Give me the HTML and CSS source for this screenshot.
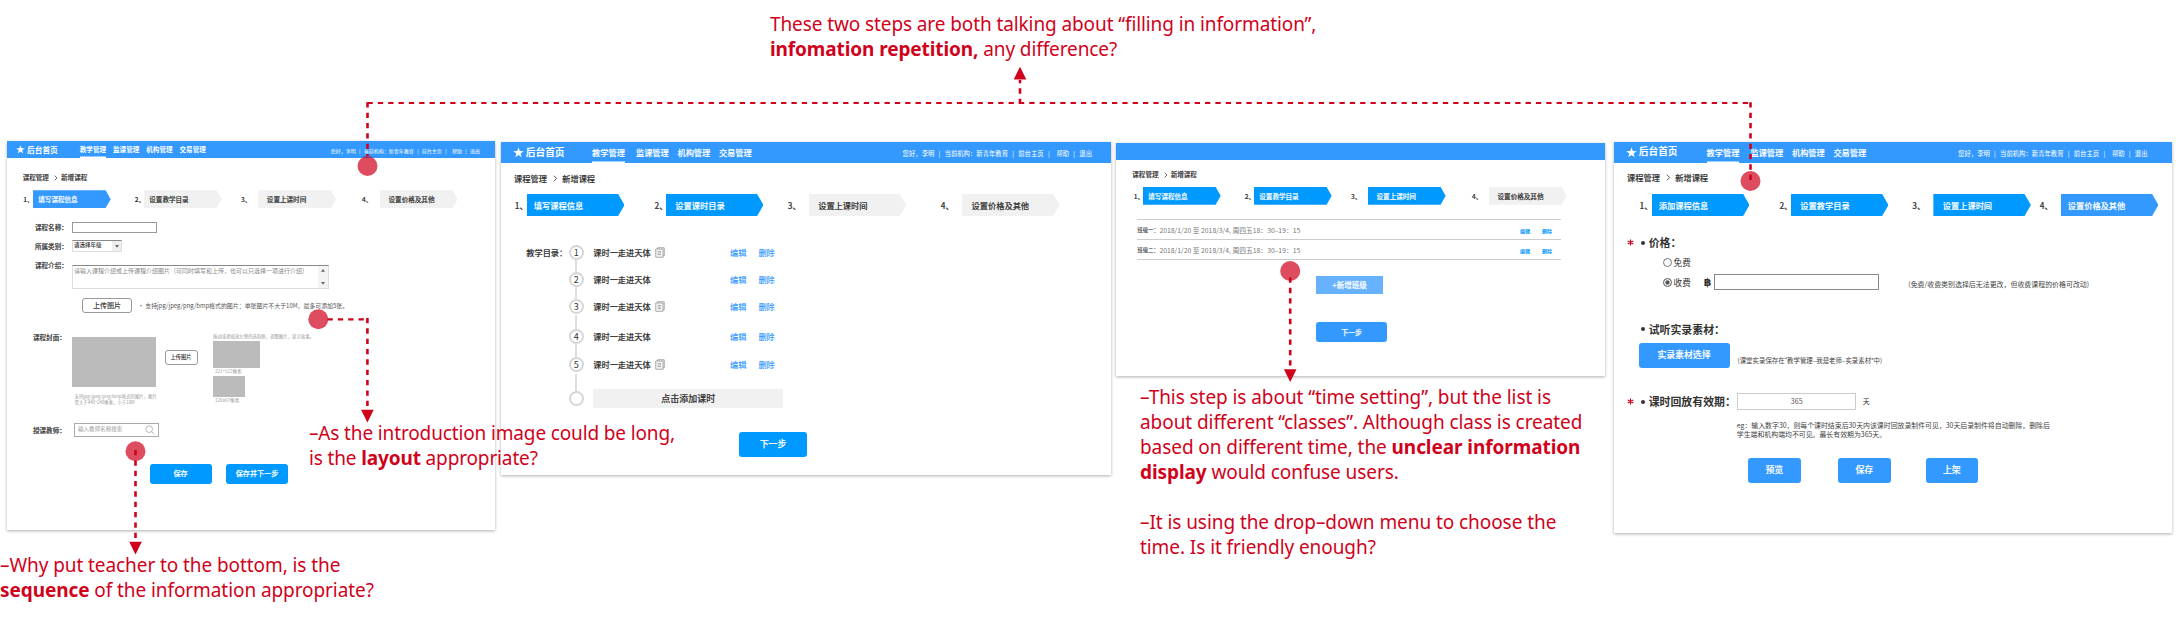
FILE: index.html
```html
<!DOCTYPE html>
<html lang="zh-CN">
<head>
<meta charset="utf-8">
<title>新增课程 flow review</title>
<link rel="stylesheet" href="styles.css">
</head>
<body>
<main class="board">

<section class="panel panel-info">
  <header class="bar">
    <svg class="star" viewBox="0 0 20 20"><path d="M10 0.5l2.4 6.9 7.2.1-5.8 4.3 2.1 7L10 14.6l-5.9 4.2 2.1-7L.4 7.500l7.200-.1z"/></svg>
    <b class="home">后台首页</b>
    <nav class="nav"><span class="on">教学管理</span><span>监课管理</span><span>机构管理</span><span>交易管理</span></nav>
    <div class="user"><span>您好，李明</span><i>|</i><span>当前机构：新青年教育</span><i>|</i><span>前台主页</span><i>|</i><span class="help">帮助</span><i>|</i><span>退出</span></div>
  </header>
  <div class="crumb"><span>课程管理</span><svg class="gt" viewBox="0 0 6 10"><path d="M1 1l4 4-4 4"/></svg><span>新增课程</span></div>
  <div class="steps">
    <span>1、</span><span class="chev sky">填写课程信息</span>
    <span>2、</span><span class="chev">设置教学目录</span>
    <span>3、</span><span class="chev wide">设置上课时间</span>
    <span>4、</span><span class="chev wide">设置价格及其他</span>
  </div>
  <div class="field name"><label>课程名称：</label><span class="input"></span></div>
  <div class="field kind"><label>所属类别：</label><span class="select">请选择年级<span class="drop"><svg viewBox="0 0 6 4"><path d="M0 0h6l-3 4z"/></svg></span></span></div>
  <div class="field intro"><label>课程介绍：</label><span class="area"><span class="hint">请输入课程介绍或上传课程介绍图片（可同时填写和上传，也可以只选择一项进行介绍）</span><span class="scroll"><svg viewBox="0 0 6 4"><path d="M0 4h6l-3-4z"/></svg><svg viewBox="0 0 6 4"><path d="M0 0h6l-3 4z"/></svg></span></span></div>
  <div class="upload"><span class="ghost">上传图片</span><span class="tip">• 支持jpg/jpeg/png/bmp格式的图片：单张图片不大于10M，最多可添加5张。</span></div>
  <div class="cover">
    <label>课程封面：</label>
    <div class="shot"><div class="gray big"></div><p>支持jpg/jpeg/png/bmp格式的图片，图片<br>需大于440*248像素，小于10M</p></div>
    <span class="ghost small">上传图片</span>
    <div class="sizes"><p>拖动或者缩放左侧的选取框，调整图片，显示效果。</p><div class="gray mid"></div><p class="cap">221*122像素</p><div class="gray tiny"></div><p class="cap">120x67像素</p></div>
  </div>
  <div class="field teacher"><label>授课教师：</label><span class="search">输入教师名称搜索<svg viewBox="0 0 12 12"><circle cx="5" cy="5" r="4"/><path d="M8 8l3.200 3.200"/></svg></span></div>
  <div class="actions"><span class="btn">保存</span><span class="btn">保存并下一步</span></div>
</section>

<section class="panel panel-catalog">
  <header class="bar">
    <svg class="star" viewBox="0 0 20 20"><path d="M10 0.5l2.4 6.9 7.2.1-5.8 4.3 2.1 7L10 14.6l-5.9 4.2 2.1-7L.4 7.500l7.200-.1z"/></svg>
    <b class="home">后台首页</b>
    <nav class="nav"><span class="on">教学管理</span><span>监课管理</span><span>机构管理</span><span>交易管理</span></nav>
    <div class="user"><span>您好，李明</span><i>|</i><span>当前机构：新青年教育</span><i>|</i><span>前台主页</span><i>|</i><span class="help">帮助</span><i>|</i><span>退出</span></div>
  </header>
  <div class="crumb"><span>课程管理</span><svg class="gt" viewBox="0 0 6 10"><path d="M1 1l4 4-4 4"/></svg><span>新增课程</span></div>
  <div class="steps">
    <span>1、</span><span class="chev blue">填写课程信息</span>
    <span>2、</span><span class="chev blue wide">设置课时目录</span>
    <span>3、</span><span class="chev wide">设置上课时间</span>
    <span>4、</span><span class="chev wide">设置价格及其他</span>
  </div>
  <div class="catalog">
    <label>教学目录：</label>
    <ol class="lessons">
      <li class="r1"><span class="num">1</span><span class="title">课时一走进天体</span><svg class="doc" viewBox="0 0 10 11"><path d="M2.500 2V.8h6.700v8H8M.8 2H8v8.200H.8zM2.500 4.300h3.700M2.500 6h3.700M2.500 7.700h3.700"/></svg><a>编辑</a><a>删除</a></li>
      <li class="r2"><span class="num">2</span><span class="title">课时一走进天体</span><span></span><a>编辑</a><a>删除</a></li>
      <li class="r3"><span class="num">3</span><span class="title">课时一走进天体</span><svg class="doc" viewBox="0 0 10 11"><path d="M2.500 2V.8h6.700v8H8M.8 2H8v8.200H.8zM2.500 4.300h3.700M2.500 6h3.700M2.500 7.700h3.700"/></svg><a>编辑</a><a>删除</a></li>
      <li class="r4"><span class="num">4</span><span class="title">课时一走进天体</span><span></span><a>编辑</a><a>删除</a></li>
      <li class="r5"><span class="num">5</span><span class="title">课时一走进天体</span><svg class="doc" viewBox="0 0 10 11"><path d="M2.500 2V.8h6.700v8H8M.8 2H8v8.200H.8zM2.500 4.300h3.700M2.500 6h3.700M2.500 7.700h3.700"/></svg><a>编辑</a><a>删除</a></li>
      <li class="add"><span class="num"></span><span class="addbar">点击添加课时</span></li>
    </ol>
  </div>
  <span class="btn next">下一步</span>
</section>

<section class="panel panel-time">
  <header class="bar"></header>
  <div class="crumb"><span>课程管理</span><svg class="gt" viewBox="0 0 6 10"><path d="M1 1l4 4-4 4"/></svg><span>新增课程</span></div>
  <div class="steps">
    <span>1、</span><span class="chev blue">填写课程信息</span>
    <span>2、</span><span class="chev blue">设置教学目录</span>
    <span>3、</span><span class="chev blue wide">设置上课时间</span>
    <span>4、</span><span class="chev wide">设置价格及其他</span>
  </div>
  <div class="classes">
    <div class="class"><span class="cls">班级一：</span><span class="when">2018/1/20 至 2018/3/4, 周四五18：30–19：15</span><a>编辑</a><a>删除</a></div>
    <div class="class"><span class="cls">班级二：</span><span class="when">2018/1/20 至 2018/3/4, 周四五18：30–19：15</span><a>编辑</a><a>删除</a></div>
  </div>
  <span class="btn plus">+新增班级</span>
  <span class="btn next">下一步</span>
</section>

<section class="panel panel-price">
  <header class="bar">
    <svg class="star" viewBox="0 0 20 20"><path d="M10 0.5l2.4 6.9 7.2.1-5.8 4.3 2.1 7L10 14.6l-5.9 4.2 2.1-7L.4 7.500l7.200-.1z"/></svg>
    <b class="home">后台首页</b>
    <nav class="nav"><span class="on">教学管理</span><span>监课管理</span><span>机构管理</span><span>交易管理</span></nav>
    <div class="user"><span>您好，李明</span><i>|</i><span>当前机构：新青年教育</span><i>|</i><span>前台主页</span><i>|</i><span class="help">帮助</span><i>|</i><span>退出</span></div>
  </header>
  <div class="crumb"><span>课程管理</span><svg class="gt" viewBox="0 0 6 10"><path d="M1 1l4 4-4 4"/></svg><span>新增课程</span></div>
  <div class="steps">
    <span>1、</span><span class="chev blue">添加课程信息</span>
    <span>2、</span><span class="chev blue wide">设置教学目录</span>
    <span>3、</span><span class="chev blue wide">设置上课时间</span>
    <span>4、</span><span class="chev sky">设置价格及其他</span>
  </div>
  <div class="head price"><svg class="must" viewBox="0 0 8 8"><path d="M4 .5v7M.8 2.200l6.400 3.600M7.200 2.200L.8 5.800"/></svg><i class="dot"></i><b>价格：</b></div>
  <div class="pay free"><i class="radio"></i><span>免费</span></div>
  <div class="pay paid"><i class="radio checked"></i><span>收费</span><b class="baht">฿</b><span class="input"></span><span class="note">(免费/收费类别选择后无法更改，但收费课程的价格可改动)</span></div>
  <div class="head trial"><span></span><i class="dot"></i><b>试听实录素材：</b></div>
  <div class="pick"><span class="btn">实录素材选择</span><span class="note">(课堂实录保存在<q>教学管理–我是老师–实录素材</q>中)</span></div>
  <div class="head valid"><svg class="must" viewBox="0 0 8 8"><path d="M4 .5v7M.8 2.200l6.400 3.600M7.200 2.200L.8 5.800"/></svg><i class="dot"></i><b>课时回放有效期：</b><span class="days">365</span><span class="unit">天</span></div>
  <p class="eg">eg：输入数字30，则每个课时结束后30天内该课时回放录制件可见，30天后录制件将自动删除，删除后<br>学生端和机构端均不可见。最长有效期为365天。</p>
  <div class="actions"><span class="btn">预览</span><span class="btn">保存</span><span class="btn">上架</span></div>
</section>

<svg class="links" viewBox="0 0 2176 629">
  <g class="spots">
    <circle cx="367.500" cy="166" r="10"/><circle cx="1750.500" cy="181" r="10"/>
    <circle cx="318.300" cy="319.300" r="10"/><circle cx="135.500" cy="451.200" r="10"/><circle cx="1290.200" cy="271" r="10"/>
  </g>
  <g class="dashes">
    <path class="thin" d="M367.500 103H1750.500"/><path d="M367.500 102.300V156"/><path d="M1750.500 102.300V180"/><path d="M1020 104V80"/>
    <path class="thin" d="M327.500 319.300H368.500"/><path d="M367.400 318V408"/><path d="M135.500 450V541"/><path d="M1290.200 277.500V368"/>
  </g>
  <g class="tips">
    <path d="M1020 66.700l6.300 12.800h-12.600z"/><path d="M367.400 422.500l-6.300-12.800h12.600z"/>
    <path d="M135.500 554.500l-6.300-12.800h12.600z"/><path d="M1290.200 382l-6.300-12.800h12.600z"/>
  </g>
</svg>

<p class="comment c-repeat">These two steps are both talking about “filling in information”,<br><b>infomation repetition,</b> any difference?</p>
<p class="comment c-layout">–As the introduction image could be long,<br>is the <b>layout</b> appropriate?</p>
<p class="comment c-time">–This step is about “time setting”, but the list is<br>about different “classes”. Although class is created<br>based on different time, the <b>unclear information</b><br><b>display</b> would confuse users.<br><br>–It is using the drop–down menu to choose the<br>time. Is it friendly enough?</p>
<p class="comment c-order">–Why put teacher to the bottom, is the<br><b>sequence</b> of the information appropriate?</p>
</main>
</body>
</html>
```

FILE: styles.css
```css
* { box-sizing: border-box; }
body { margin: 0; background: #fff; }
p, ol { margin: 0; padding: 0; }
i { font-style: normal; }

.board {
  position: relative;
  width: 2176px;
  height: 629px;
  overflow: hidden;
  font-family: "Noto Sans CJK SC", "Noto Sans", sans-serif;
  color: #333;
}

/* Panels placed on the board */
.panel {
  position: absolute;
  display: flex;
  flex-direction: column;
  background: #fff;
  box-shadow: 0 1px 3px rgba(0, 0, 0, .32);
  line-height: 1;
  font-weight: 500;
  white-space: nowrap;
}
.panel-info { left: 7px; top: 141px; width: 488px; height: 389px; font-size: 6.57px; }
.panel-catalog { left: 501px; top: 142px; width: 610px; height: 333px; font-size: 8.22px; }
.panel-time { left: 1116px; top: 143px; width: 488.500px; height: 233px; font-size: 6.57px; }
.panel-price { left: 1614px; top: 141.500px; width: 557.500px; height: 391.500px; font-size: 8.22px; }
.crumb, .steps, .field label, .cover label, .catalog label, .title, .addbar, .btn, .nav { -webkit-text-stroke-width: .15px; }

/* Top bar */
.bar { display: flex; align-items: center; background: #39f; color: #fff; }
.star { fill: #fff; }
.nav { display: flex; align-self: stretch; }
.nav span { display: flex; align-items: center; }
.nav .on { box-shadow: inset 0 -1.500px #fff; }
.user { display: flex; margin-left: auto; gap: .67em; font-weight: 400; }
.user .help { margin-left: .4em; }

.panel-info .bar { height: 17px; padding: 0 15px 0 9px; }
.panel-info .star { width: 9px; height: 9px; margin-right: 2px; }
.panel-info .home { font-size: 7.700px; margin-right: 22px; }
.panel-info .nav { gap: 7px; font-weight: 700; -webkit-text-stroke-width: 0; }
.panel-info .user { font-size: 5px; padding-top: 2px; }

.panel-catalog .bar { height: 21px; padding: 0 19px 0 11.500px; }
.panel-price .bar { height: 21px; padding: 0 24px 0 11.500px; }
.panel-catalog .star, .panel-price .star { width: 11px; height: 11px; margin-right: 2.300px; }
.panel-catalog .home, .panel-price .home { font-size: 9.700px; margin-right: 27.500px; }
.panel-price .home { margin-right: 29px; }
.panel-catalog .nav, .panel-price .nav { gap: 8.600px; }
.panel-catalog .on, .panel-price .on { margin-right: 2.400px; }
.panel-catalog .user, .panel-price .user { font-size: 6.350px; padding-top: 3.500px; }
.panel-time .bar { height: 17px; }

/* Breadcrumb */
.crumb { display: flex; align-items: center; }
.gt { fill: none; stroke: #333; stroke-width: 1.200; }
.panel-info .crumb, .panel-time .crumb { height: 11px; margin: 14px 0 0 15.700px; }
.panel-time .crumb { margin: 9px 0 0 16.300px; }
.panel-info .gt, .panel-time .gt { width: 3.600px; height: 6px; margin: 0 3.500px 0 5px; }
.panel-catalog .crumb, .panel-price .crumb { height: 12px; margin: 9px 0 0 13px; }
.panel-catalog .gt, .panel-price .gt { width: 4.500px; height: 7px; margin: 0 4.500px 0 6.300px; }

/* Steps */
.steps { display: grid; align-items: center; }
.chev {
  display: flex;
  align-items: center;
  justify-self: start;
  width: 77.700px;
  height: 17.700px;
  padding-left: 5.300px;
  background: #f1f1f1;
  clip-path: polygon(0 0, 93.500% 0, 100% 50%, 93.500% 100%, 0 100%);
}
.chev.wide { padding-left: 8.600px; }
.chev.sky { background: #39f; color: #fff; }
.chev.blue { background: #09f; color: #fff; }
.panel-info .steps { margin: 7.300px 0 0 16.300px; grid-template-columns: 9.700px 101.700px 9.300px 97px 17.300px 103.700px 18px 78px; }
.panel-time .steps { margin: 7px 0 0 17.700px; grid-template-columns: 9.300px 101.700px 9.300px 97px 17px 104px 17px 78px; }
.panel-catalog .steps { margin: 10px 0 0 13.800px; grid-template-columns: 12.200px 127.600px 11.400px 121.800px 21px 132px 21.400px 98px; }
.panel-price .steps { margin: 10.500px 0 0 25.600px; grid-template-columns: 12.400px 127.400px 11.600px 121.400px 21px 106.400px 21.200px 98px; }
.panel-catalog .chev, .panel-price .chev { width: 97.500px; height: 22px; padding-left: 6.800px; }
.panel-catalog .chev.wide, .panel-price .chev.wide { padding-left: 9.400px; }

/* Buttons */
.btn { display: flex; align-items: center; justify-content: center; background: #39f; color: #fff; border-radius: 3px; }
.ghost { display: flex; align-items: center; justify-content: center; border: 1px solid #999; border-radius: 3px; width: 50px; height: 14.500px; font-size: 7px; }
.ghost.small { width: 33px; font-size: 5.300px; margin: 16px 0 0 7.500px; height: 14.500px; }
.gray { background: #bbb; }

/* Course information */
.field { display: flex; align-items: flex-start; }
.field label { width: 37px; }
.field label, .cover label { flex: none; }
.name { margin: 14.500px 0 0 28px; }
.name label { margin-top: 2px; }
.name .input { width: 85px; height: 11px; border: 1px solid #999; }
.kind { margin: 6.500px 0 0 28px; }
.kind label { margin-top: 3px; }
.select { display: flex; align-items: center; width: 50px; height: 12.500px; border: 1px solid #ddd; border-top-color: #888; padding-left: 1px; font-size: 5.500px; }
.drop { margin-left: auto; width: 9px; height: 10.500px; background: #eee; display: flex; align-items: center; justify-content: center; }
.drop svg, .scroll svg { width: 4px; height: 2.700px; fill: #666; }
.intro { margin: 10px 0 0 28px; }
.area { display: flex; justify-content: space-between; width: 256.500px; height: 24.500px; margin-top: 2.500px; border: 1px solid #ddd; border-top-color: #888; padding-left: 1px; font-size: 6px; font-weight: 400; color: #888; }
.hint { margin-top: 2px; }
.scroll { display: flex; flex-direction: column; justify-content: space-between; align-items: center; width: 10px; padding: 3.500px 0; background: #f4f4f4; }
.upload { display: flex; align-items: center; gap: 6px; margin: 9px 0 0 75px; }
.tip { font-size: 5.930px; font-weight: 400; color: #555; }
.cover { display: flex; height: 70px; margin: 21.500px 0 0 26px; }
.cover label { width: 39px; margin-top: 0; }
.shot { width: 85px; padding-top: 3px; }
.gray.big { width: 84px; height: 50px; }
.shot p { font-size: 4.380px; line-height: 6.200px; margin: 5.500px 0 0 2.600px; color: #999; font-weight: 400; }
.sizes { margin-left: 15.500px; font-size: 4.400px; color: #999; font-weight: 400; }
.gray.mid { width: 47.300px; height: 27px; margin-top: 2px; }
.gray.tiny { width: 32px; height: 21px; }
.cap { height: 8px; padding: 1.500px 0 0 2px; font-size: 4.600px; }
.teacher { margin: 18.500px 0 0 26px; }
.teacher label { width: 41px; margin-top: 4px; }
.search { display: flex; align-items: center; justify-content: space-between; width: 85px; height: 14.500px; border: 1px solid #aaa; padding: 0 3px; font-size: 5.550px; font-weight: 400; color: #999; }
.search svg { width: 10px; height: 10px; fill: none; stroke: #aaa; }
.actions { display: flex; }
.panel-info .actions { gap: 14.500px; margin: 26.500px 0 0 142.500px; }
.panel-info .actions .btn { width: 62px; height: 20px; background: #09f; font-size: 7.100px; }

/* Lesson catalogue */
.catalog { display: flex; margin: 29px 0 0 25.200px; }
.catalog label { width: 42.500px; margin-top: 3px; }
.lessons { list-style: none; display: flex; flex-direction: column; }
.lessons li { display: grid; grid-template-columns: 24.500px 62px 74.800px 28.400px 20px; height: 15px; align-items: center; }
.num { display: flex; align-items: center; justify-content: center; position: relative; width: 15px; height: 15px; border: 2px solid #d6d6d6; border-radius: 50%; font-size: 9px; font-weight: 400; }
.num::after { content: ""; position: absolute; left: 4.500px; bottom: 13px; width: 2px; height: 14px; background: #ddd; }
.r1 .num::after { display: none; }
.doc { width: 10px; height: 11px; fill: none; stroke: #999; stroke-width: .9; }
.lessons a { color: #39f; }
.lessons .r2 { margin-top: 11.500px; }
.lessons .r3 { margin-top: 12.500px; }
.lessons .r4 { margin-top: 14.500px; }
.lessons .r5 { margin-top: 13.500px; }
.lessons .add { margin-top: 16.500px; grid-template-columns: 24.500px 190px; }
.r2 .num::after, .r3 .num::after { height: 12.500px; }
.add .num::after { height: 17px; }
.addbar { display: flex; align-items: center; justify-content: center; height: 19.500px; background: #f1f1f1; font-size: 9px; }
.panel-catalog .next { width: 68px; height: 25px; margin: 28px 0 0 238px; background: #09f; font-size: 8.900px; }

/* Class times */
.classes { margin: 14px 0 0 21.300px; width: 423.700px; border-top: 1px solid #ccc; }
.class { display: grid; grid-template-columns: 22.200px 360.500px 22px 12px; align-items: center; height: 20.400px; padding-top: 2px; border-bottom: 1px solid #ccc; }
.cls { font-size: 5.400px; }
.when { font-size: 6.800px; color: #777; font-weight: 400; }
.class a { font-size: 5px; color: #09f; font-weight: 700; }
.panel-time .plus { width: 67px; height: 18px; margin: 15.500px 0 0 200px; background: #66b2ff; border-radius: 0; font-size: 7.500px; }
.panel-time .next { width: 71px; height: 20px; margin: 28px 0 0 200px; font-size: 6.900px; }

/* Price */
.head { display: grid; grid-template-columns: 13.500px 8px 88.500px 125.500px 20px; align-items: center; margin-left: 13.200px; height: 17px; font-size: 10.900px; }
.must { width: 7px; height: 7px; fill: none; stroke: #d0021b; stroke-width: 1.300; }
.dot { width: 4px; height: 4px; border-radius: 50%; background: #333; }
.price { margin-top: 18px; }
.pay { display: flex; align-items: center; height: 17px; margin-left: 49.300px; font-size: 8.600px; font-weight: 400; }
.free { margin-top: 2.500px; }
.paid { margin-top: 3px; }
.radio { width: 9px; height: 9px; margin-right: 1.300px; border: 1px solid #777; border-radius: 50%; }
.radio.checked { background: #555; box-shadow: inset 0 0 0 1.300px #fff; }
.baht { margin-left: 13px; width: 10px; font: 700 11px "DejaVu Sans", sans-serif; }
.pay .input { width: 165px; height: 16.500px; border: 1px solid #888; }
.note { font-size: 6.950px; font-weight: 400; color: #444; }
.pay .note { margin: 4px 0 0 29.500px; }
.trial { margin-top: 30px; }
.pick { display: flex; align-items: flex-end; gap: 8px; margin: 5px 0 0 24.500px; }
.pick .btn { width: 91px; height: 25px; font-size: 8.900px; }
.pick .note { margin-bottom: 3.500px; font-size: 6.450px; }
.pick q { quotes: "“" "”"; }
.pick q::before, .pick q::after { font-family: Roboto, sans-serif; }
.valid { margin-top: 25.500px; }
.days { display: flex; align-items: center; justify-content: center; width: 119px; height: 17px; border: 1px solid #ccc; font-size: 7px; font-weight: 400; color: #555; }
.unit { font-size: 7px; font-weight: 400; }
.eg { margin: 10.500px 0 0 122.800px; font-size: 6.900px; line-height: 9.700px; font-weight: 400; color: #444; }
.panel-price .actions { margin: 18px 0 0 134px; }
.panel-price .actions .btn { width: 52.500px; height: 25px; font-size: 8.900px; margin-right: 37.500px; }
.panel-price .actions .btn:nth-child(2) { margin-right: 35px; }

/* Review comments and connectors */
.links { position: absolute; inset: 0; width: 2176px; height: 629px; }
.spots { fill: rgba(208, 2, 27, .7); }
.dashes { fill: none; stroke: #d0021b; stroke-width: 2.600; stroke-dasharray: 5.300 5.040; }
.dashes .thin { stroke-width: 2.200; }
.tips { fill: #d0021b; }
.comment { position: absolute; color: #d0021b; font: 400 19px/25px "Noto Sans", sans-serif; white-space: nowrap; }
.c-repeat { left: 770px; top: 12px; letter-spacing: -.1px; }
.c-layout { left: 309px; top: 421px; letter-spacing: -.14px; }
.c-time { left: 1140px; top: 385px; letter-spacing: -.07px; }
.c-order { left: 0; top: 553px; letter-spacing: -.08px; }
```
